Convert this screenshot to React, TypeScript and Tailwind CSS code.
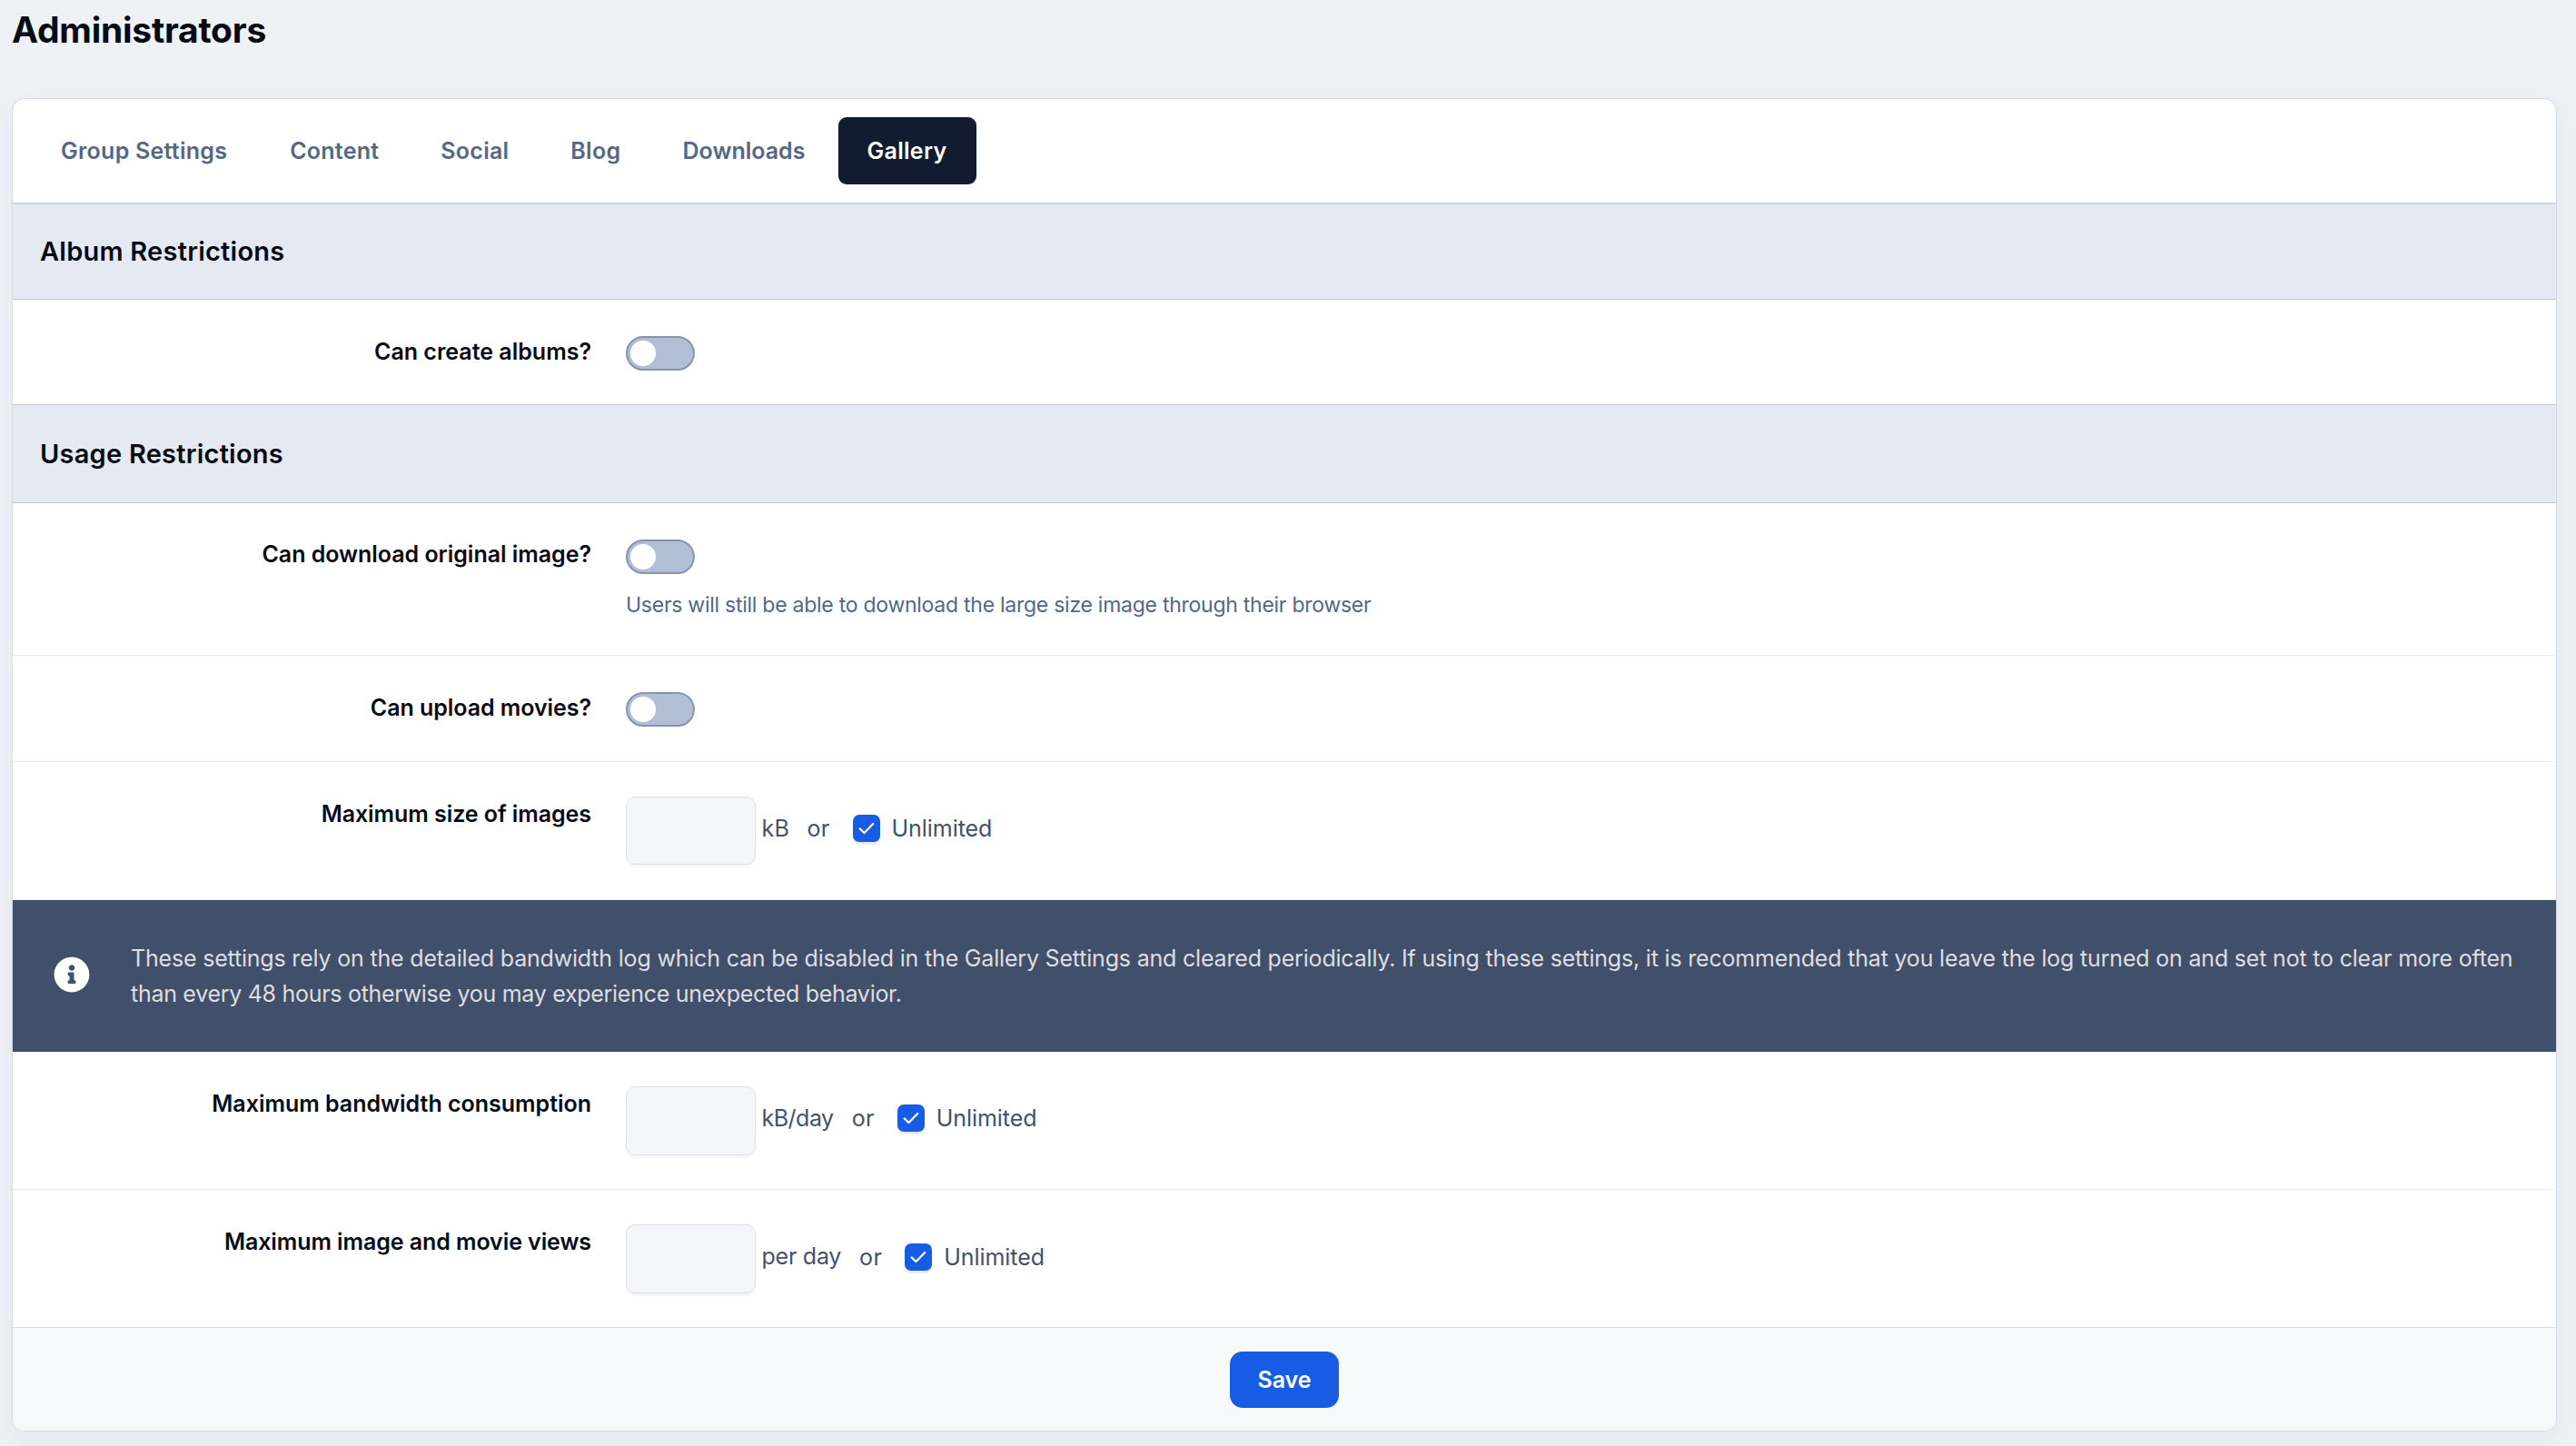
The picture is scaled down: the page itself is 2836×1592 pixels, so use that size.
import React from "react";

const tabs = [
  { name: "Group Settings", cls: "mr-px tracking-[0.25px]" },
  { name: "Content", cls: "tracking-[0.25px]" },
  { name: "Social", cls: "tracking-[0.25px]" },
  { name: "Blog", cls: "tracking-[0.3px]" },
  { name: "Downloads", cls: "tracking-[0.02px]" },
  { name: "Gallery", cls: "tracking-[0.3px]", active: true },
];

function SectionHeader({ title, className }: { title: string; className: string }) {
  return (
    <h2
      className={
        "flex items-center border-b border-[#bfc9dc] bg-[#e5e9f2] pl-[30px] text-[29px] font-semibold leading-none tracking-[0.23px] text-[#070b14] " +
        className
      }
    >
      {title}
    </h2>
  );
}

function Row({
  label,
  className,
  labelClass,
  children,
}: {
  label: string;
  className: string;
  labelClass: string;
  children: React.ReactNode;
}) {
  return (
    <div className={"flex items-start gap-[38px] bg-white " + className}>
      <div
        className={
          "w-[637px] shrink-0 text-right text-[25px] font-semibold leading-[39px] text-[#070b14] " + labelClass
        }
      >
        {label}
      </div>
      {children}
    </div>
  );
}

function Toggle() {
  return (
    <button
      type="button"
      role="switch"
      aria-checked="false"
      className="block h-[38px] w-[76px] rounded-full border-2 border-[#8494b1] bg-[#b0bed6] p-[3px]"
    >
      <span className="block size-7 rounded-full bg-white" />
    </button>
  );
}

function Limit({
  unit,
  unitClass,
  inputClass,
  orClass,
}: {
  unit: string;
  unitClass: string;
  inputClass: string;
  orClass: string;
}) {
  return (
    <div className="mt-[38px] flex items-start text-[25px] leading-[39px] text-[#42516c]">
      <div
        className={
          "w-[143px] rounded-[10px] border border-[#dde0e6] bg-[#f5f6f9] shadow-[0_4px_2px_-1px_rgba(0,0,0,0.035)] " +
          inputClass
        }
      />
      <span className={"ml-[6.5px] mt-4 " + unitClass}>{unit}</span>
      <span className={"flex items-start " + orClass}>
        <span className="tracking-[0.3px]">or</span>
        <span className="ml-[25px] mt-[4px] flex size-[30px] items-center justify-center rounded-[7px] bg-[#175ce5] shadow-[0_4px_2px_-1px_rgba(0,0,0,0.09)]">
          <svg viewBox="0 0 30 30" className="size-[30px]" fill="none" stroke="#fff" strokeWidth="2.2" strokeLinecap="round" strokeLinejoin="round">
            <path d="M7.6 15.4 12.5 20 22.2 10" />
          </svg>
        </span>
        <span className="ml-[13px] tracking-[-0.05px]">Unlimited</span>
      </span>
    </div>
  );
}

export default function App() {
  return (
    <div className="h-[1592px] w-[2836px] overflow-hidden bg-[#eef1f6] font-['Inter','Liberation_Sans',sans-serif]">
      <h1 className="flex h-[108px] items-start pl-[13px] pt-[13px] text-[39px] font-bold leading-[40px] tracking-[-0.25px] text-[#070b14]">
        Administrators
      </h1>
      <main className="ml-[13px] h-[1468px] w-[2802px] overflow-hidden rounded-[14px] border border-[#d3dae6] bg-white shadow-[0_10px_30px_rgba(30,50,90,0.05)]">
        <nav className="flex h-[116px] items-start gap-1 border-b-2 border-[#d0d7e2] pl-[21px] pt-5">
          {tabs.map((t) => (
            <a
              key={t.name}
              className={
                "flex h-[74px] items-center rounded-[9px] px-8 text-[25px] font-semibold leading-none " +
                (t.active ? "bg-[#111c30] text-white " : "text-[#556788] ") +
                t.cls
              }
            >
              {t.name}
            </a>
          ))}
        </nav>

        <SectionHeader title="Album Restrictions" className="h-[105px] pb-[2px]" />
        <Row label="Can create albums?" className="h-[116px] border-b border-[#bfc9dc]" labelClass="mt-[38px]">
          <div className="mt-[40px]">
            <Toggle />
          </div>
        </Row>

        <SectionHeader title="Usage Restrictions" className="h-[108px]" />
        <Row label="Can download original image?" className="h-[168px] border-b border-[#ebecee]" labelClass="mt-[37px] tracking-[-0.03px]">
          <div className="mt-[40px]">
            <Toggle />
            <p className="mt-[15px] text-[23px] leading-[38px] tracking-[-0.26px] text-[#556788]">
              Users will still be able to download the large size image through their browser
            </p>
          </div>
        </Row>
        <Row label="Can upload movies?" className="h-[117px] border-b border-[#ebecee]" labelClass="mt-[38px] tracking-[-0.05px]">
          <div className="mt-[40px]">
            <Toggle />
          </div>
        </Row>
        <Row label="Maximum size of images" className="h-[152px] border-b border-[#ebecee]" labelClass="mt-[38px] tracking-[-0.06px]">
          <Limit unit="kB" unitClass="tracking-[0.2px]" inputClass="h-[75px]" orClass="mt-4 ml-[19.5px]" />
        </Row>

        <div className="flex h-[167px] items-start bg-[#41506a]">
          <svg viewBox="0 0 512 512" className="ml-[45px] mt-[62px] size-10 shrink-0" fill="#fff">
            <path d="M256 8C119.043 8 8 119.083 8 256c0 136.997 111.043 248 248 248s248-111.003 248-248C504 119.083 392.957 8 256 8zm0 110c23.196 0 42 18.804 42 42s-18.804 42-42 42-42-18.804-42-42 18.804-42 42-42zm56 254c0 6.627-5.373 12-12 12h-88c-6.627 0-12-5.373-12-12v-24c0-6.627 5.373-12 12-12h12v-64h-12c-6.627 0-12-5.373-12-12v-24c0-6.627 5.373-12 12-12h64c6.627 0 12 5.373 12 12v100h12c6.627 0 12 5.373 12 12v24z" />
          </svg>
          <p className="ml-[45px] mt-[45px] w-[2640px] text-[25px] leading-[39px] tracking-[-0.19px] text-[#dcdee3]">
            These settings rely on the detailed bandwidth log which can be disabled in the Gallery Settings and cleared
            periodically. If using these settings, it is recommended that you leave the log turned on and set not to
            clear more often{" "}
            <span className="tracking-[-0.29px]">
              than every 48 hours otherwise you may experience unexpected behavior.
            </span>
          </p>
        </div>

        <Row label="Maximum bandwidth consumption" className="h-[152px] border-b border-[#ebecee]" labelClass="mt-[38px] tracking-[-0.01px]">
          <Limit unit="kB/day" unitClass="tracking-[-0.5px]" inputClass="h-[76px]" orClass="mt-4 ml-5" />
        </Row>
        <Row label="Maximum image and movie views" className="h-[151px]" labelClass="mt-[38px] tracking-[-0.08px]">
          <Limit unit="per day" unitClass="tracking-[-0.25px]" inputClass="h-[76px]" orClass="mt-[17px] ml-5" />
        </Row>

        <footer className="flex h-[114px] items-start justify-center border-t border-[#d7dce8] bg-[#f8f9fb] pt-[26px]">
          <button
            type="button"
            className="flex h-[62px] w-[120px] items-center justify-center rounded-[14px] bg-[#175ce5] text-[25px] font-semibold leading-none text-white"
          >
            Save
          </button>
        </footer>
      </main>
    </div>
  );
}
